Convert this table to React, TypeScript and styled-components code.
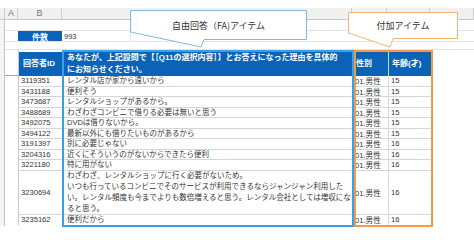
import styled, { createGlobalStyle } from 'styled-components'

const BLUE = '#0b63b8'
const FRAME_BLUE = '#3aa0e6'
const FRAME_ORANGE = '#f2994a'
const GRID = '#d6d6d6'
const TEXT = '#333'

type Row = {
	id: string
	lines: string[]
	sex: string
	age: number
}

const rows: Row[] = [
	{ id: '3119351', lines: ['レンタル店が家から遠いから'], sex: '01.男性', age: 15 },
	{ id: '3431188', lines: ['便利そう'], sex: '01.男性', age: 15 },
	{ id: '3473687', lines: ['レンタルショップがあるから。'], sex: '01.男性', age: 15 },
	{ id: '3488689', lines: ['わざわざコンビニで借りる必要は無いと思う'], sex: '01.男性', age: 15 },
	{ id: '3492075', lines: ['DVDは借りないから。'], sex: '01.男性', age: 15 },
	{ id: '3494122', lines: ['最新以外にも借りたいものがあるから'], sex: '01.男性', age: 15 },
	{ id: '3191397', lines: ['別に必要じゃない'], sex: '01.男性', age: 16 },
	{ id: '3204316', lines: ['近くにそういうのがないからできたら便利'], sex: '01.男性', age: 16 },
	{ id: '3221180', lines: ['特に用がない'], sex: '01.男性', age: 16 },
	{
		id: '3230694',
		lines: [
			'わざわざ、レンタルショップに行く必要がないため。',
			'いつも行っているコンビニでそのサービスが利用できるならジャンジャン利用した',
			'い。レンタル頻度も今までよりも数倍増えると思う。レンタル会社としては増収にな',
			'ると思う。',
		],
		sex: '01.男性',
		age: 16,
	},
	{ id: '3235162', lines: ['便利だから'], sex: '01.男性', age: 16 },
]

const rowHeight = (r: Row) => (r.lines.length > 1 ? r.lines.length * 11 : 10.5)

const GlobalStyle = createGlobalStyle`
	html, body {
		margin: 0;
		padding: 0;
		background: #fff;
	}
	body {
		font-family: "Liberation Sans", "Noto Sans CJK JP", sans-serif;
		color: ${TEXT};
	}
`

const Page = styled.div`
	position: relative;
	width: 474px;
	height: 240px;
	overflow: hidden;
	padding-top: 8px;
	box-sizing: border-box;
`

const ColumnBar = styled.div`
	display: flex;
	height: 12px;
	background: #f0f0f0;
	border-bottom: 1px solid #c9c9c9;
	box-sizing: border-box;
`

const HeadCell = styled.div<{ $w?: number }>`
	${({ $w }) => ($w ? `width: ${$w}px;` : 'flex: 1;')}
	flex-shrink: 0;
	border-right: 1px solid #cfcfcf;
	box-sizing: border-box;
	font-size: 9px;
	line-height: 11px;
	color: #777;
	text-align: center;
`

const SheetBody = styled.div`
	display: flex;
`

const Gutter = styled.div`
	width: 5px;
	height: 206px;
	flex-shrink: 0;
	background: #f4f4f4;
	border-right: 1px solid #c4c4c4;
	box-sizing: border-box;
`

const Main = styled.div`
	flex: 1;
	display: flex;
	flex-direction: column;
`

const GridRow = styled.div<{ $h: number }>`
	display: flex;
	height: ${({ $h }) => $h}px;
	border-bottom: 1px solid #e4e4e4;
	box-sizing: border-box;
	flex-shrink: 0;
`

const CountLabel = styled.div`
	width: 44px;
	margin-left: 13px;
	background: ${BLUE};
	color: #fff;
	font-weight: 700;
	font-size: 8px;
	display: flex;
	align-items: center;
	justify-content: center;
`

const CountValue = styled.div`
	font-size: 7.5px;
	padding-left: 2px;
	display: flex;
	align-items: center;
	width: 66px;
	border-right: 1px solid #e4e4e4;
`

const Table = styled.div`
	display: flex;
	align-items: flex-start;
`

const FreezeLine = styled.div`
	width: 13px;
	height: 26px;
	border-bottom: 1px solid #a8a8a8;
	box-sizing: border-box;
	flex-shrink: 0;
`

const IdCol = styled.div`
	width: 43px;
	padding-top: 2px;
	display: flex;
	flex-direction: column;
	border-left: 1px solid #c8c8c8;
`

const FaCol = styled.div`
	width: 288px;
	border: 2px solid ${FRAME_BLUE};
	display: flex;
	flex-direction: column;
`

const ExtraCol = styled.div`
	border: 2px solid ${FRAME_ORANGE};
	display: flex;
`

const SubCol = styled.div<{ $w: number; $divider?: boolean }>`
	width: ${({ $w }) => $w}px;
	display: flex;
	flex-direction: column;
	${({ $divider }) => ($divider ? `border-left: 1px solid ${GRID};` : '')}
	box-sizing: border-box;
`

const HeaderCell = styled.div<{ $pad?: number }>`
	height: 24px;
	background: ${BLUE};
	color: #fff;
	font-weight: 700;
	font-size: 8px;
	line-height: 12px;
	padding-left: ${({ $pad }) => $pad ?? 2}px;
	display: flex;
	flex-direction: column;
	justify-content: center;
	white-space: nowrap;
	overflow: hidden;
`

const Cell = styled.div<{ $h: number; $indent?: number }>`
	height: ${({ $h }) => $h}px;
	border-bottom: 1px solid ${GRID};
	box-sizing: border-box;
	display: flex;
	align-items: center;
	font-size: 7.6px;
	padding-left: 2px;
	text-indent: ${({ $indent }) => $indent ?? 0}px;
	white-space: nowrap;
	overflow: hidden;
	&:last-child {
		border-bottom: none;
	}
`

const TextCell = styled(Cell)`
	flex-direction: column;
	align-items: flex-start;
	justify-content: center;
	font-size: 7.5px;
	line-height: 11px;
	padding-left: 3px;
`

const Callout = styled.div<{ $x: number; $y: number; $w: number; $h: number }>`
	position: absolute;
	left: ${({ $x }) => $x}px;
	top: ${({ $y }) => $y}px;
	width: ${({ $w }) => $w}px;
	height: ${({ $h }) => $h}px;
	svg {
		position: absolute;
		inset: 0;
	}
`

const CalloutText = styled.div<{ $bodyH: number }>`
	position: relative;
	height: ${({ $bodyH }) => $bodyH}px;
	display: flex;
	align-items: center;
	justify-content: center;
	font-size: 9px;
	color: #333;
	font-family: "Noto Sans CJK JP", sans-serif;
`

type BubbleProps = {
	x: number
	y: number
	w: number
	h: number
	tipX: number
	tipY: number
	cornerY: number
	color: string
	label: string
}

// speech bubble: box with a slanted tail cut out of the bottom-left corner
const Bubble: React.FC<BubbleProps> = ({ x, y, w, h, tipX, tipY, cornerY, color, label }) => {
	const d = `M0.5 0.5 H${w - 0.5} V${h - 0.5} H${tipX + 3} L${tipX} ${tipY} L0.5 ${cornerY} Z`
	return (
		<Callout $x={x} $y={y} $w={w} $h={tipY + 1}>
			<svg width={w} height={tipY + 1}>
				<path d={d} fill='#fff' stroke={color} strokeWidth={1} />
			</svg>
			<CalloutText $bodyH={h}>{label}</CalloutText>
		</Callout>
	)
}

const App = () => {
	return (
		<Page>
			<GlobalStyle />
			<ColumnBar>
				<HeadCell $w={5} />
				<HeadCell $w={13}>A</HeadCell>
				<HeadCell $w={44}>B</HeadCell>
				<HeadCell $w={290} />
				<HeadCell $w={35} />
				<HeadCell $w={43} />
				<HeadCell />
			</ColumnBar>
			<SheetBody>
				<Gutter />
				<Main>
					<GridRow $h={11} />
					<GridRow $h={11}>
						<CountLabel>件数</CountLabel>
						<CountValue>993</CountValue>
					</GridRow>
					<GridRow $h={8} />
					<Table>
						<FreezeLine />
						<IdCol>
							<HeaderCell $pad={4}>回答者ID</HeaderCell>
							{rows.map(r => (
								<Cell key={r.id} $h={rowHeight(r)}>{r.id}</Cell>
							))}
						</IdCol>
						<FaCol>
							<HeaderCell $pad={3}>
								<span>あなたが、上記設問で【［Q11の選択内容］】とお答えになった理由を具体的</span>
								<span>にお知らせください。</span>
							</HeaderCell>
							{rows.map(r => (
								<TextCell key={r.id} $h={rowHeight(r)}>
									{r.lines.map(l => <span key={l}>{l}</span>)}
								</TextCell>
							))}
						</FaCol>
						<ExtraCol>
							<SubCol $w={32}>
								<HeaderCell $pad={0}>性別</HeaderCell>
								{rows.map(r => (
									<Cell key={r.id} $h={rowHeight(r)} $indent={-3}>{r.sex}</Cell>
								))}
							</SubCol>
							<SubCol $w={43} $divider>
								<HeaderCell $pad={3}>年齢(才)</HeaderCell>
								{rows.map(r => (
									<Cell key={r.id} $h={rowHeight(r)}>{r.age}</Cell>
								))}
							</SubCol>
						</ExtraCol>
					</Table>
				</Main>
			</SheetBody>
			<Bubble x={130} y={10} w={177} h={30} tipX={71} tipY={37} cornerY={22} color='#7fb9e2' label='自由回答（FA)アイテム' />
			<Bubble x={348} y={12} w={110} h={27} tipX={42} tipY={35} cornerY={21} color='#f5b47a' label='付加アイテム' />
		</Page>
	)
}

export default App
